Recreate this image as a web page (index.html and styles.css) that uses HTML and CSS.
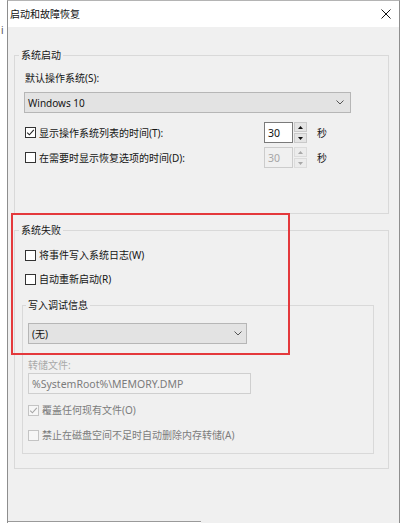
FILE: index.html
```html
<!DOCTYPE html>
<html lang="zh-CN">
<head>
<meta charset="utf-8">
<title>启动和故障恢复</title>
<link rel="stylesheet" href="styles.css">
</head>
<body>
<div class="screen">
  <div class="gutter">
    <span class="frag frag1">i</span>
  </div>
  <div class="window">
    <div class="titlebar">
      <span class="title">启动和故障恢复</span>
      <svg class="close" width="10" height="10" viewBox="0 0 10 10"><path d="M0.5 0.5 L9.5 9.5 M9.5 0.5 L0.5 9.5" stroke="#111" stroke-width="1" fill="none"/></svg>
    </div>
    <div class="content">
      <fieldset class="group g1">
        <legend class="lg1">系统启动</legend>
        <div class="body">
          <div class="text lbl-default">默认操作系统(S):</div>
          <div class="combo combo1">
            <span>Windows 10</span>
            <svg width="8" height="5" viewBox="0 0 8 5"><path d="M0.5 0.5 L4 4 L7.5 0.5" fill="none" stroke="#555" stroke-width="1"/></svg>
          </div>
          <div class="row row-spin spin-row1">
            <div class="check-label wide">
              <span class="cb"><svg width="9" height="9" viewBox="0 0 9 9"><path d="M1.2 4.6 L3.4 6.8 L7.8 1.8" stroke="#222" stroke-width="1.1" fill="none"/></svg></span>
              <span class="text">显示操作系统列表的时间(T):</span>
            </div>
            <div class="spin">
              <div class="spin-input">30</div>
              <div class="spin-btns">
                <span class="spin-btn"><svg width="5" height="3" viewBox="0 0 5 3"><path d="M0 3 L2.5 0 L5 3Z" fill="#111"/></svg></span>
                <span class="spin-btn"><svg width="5" height="3" viewBox="0 0 5 3"><path d="M0 0 L2.5 3 L5 0Z" fill="#111"/></svg></span>
              </div>
            </div>
            <span class="unit">秒</span>
          </div>
          <div class="row row-spin spin-row2">
            <div class="check-label wide">
              <span class="cb"></span>
              <span class="text">在需要时显示恢复选项的时间(D):</span>
            </div>
            <div class="spin disabled">
              <div class="spin-input">30</div>
              <div class="spin-btns">
                <span class="spin-btn"><svg width="5" height="3" viewBox="0 0 5 3"><path d="M0 3 L2.5 0 L5 3Z" fill="#a8a8a8"/></svg></span>
                <span class="spin-btn"><svg width="5" height="3" viewBox="0 0 5 3"><path d="M0 0 L2.5 3 L5 0Z" fill="#a8a8a8"/></svg></span>
              </div>
            </div>
            <span class="unit">秒</span>
          </div>
        </div>
      </fieldset>

      <fieldset class="group g2">
        <legend class="lg1">系统失败</legend>
        <div class="body">
          <div class="row check-row row-w">
            <div class="check-label">
              <span class="cb"></span>
              <span class="text">将事件写入系统日志(W)</span>
            </div>
          </div>
          <div class="row check-row row-r">
            <div class="check-label">
              <span class="cb"></span>
              <span class="text">自动重新启动(R)</span>
            </div>
          </div>
          <fieldset class="group sub">
            <legend class="lg2">写入调试信息</legend>
            <div class="body">
              <div class="combo combo2">
                <span>(无)</span>
                <svg width="8" height="5" viewBox="0 0 8 5"><path d="M0.5 0.5 L4 4 L7.5 0.5" fill="none" stroke="#555" stroke-width="1"/></svg>
              </div>
              <div class="text dim lbl-dump">转储文件:</div>
              <div class="field">%SystemRoot%\MEMORY.DMP</div>
              <div class="row check-row sub-row row-o">
                <div class="check-label">
                  <span class="cb off"><svg width="9" height="9" viewBox="0 0 9 9"><path d="M1.2 4.6 L3.4 6.8 L7.8 1.8" stroke="#a6a6a6" stroke-width="1.1" fill="none"/></svg></span>
                  <span class="text grey">覆盖任何现有文件(O)</span>
                </div>
              </div>
              <div class="row check-row sub-row row-a">
                <div class="check-label">
                  <span class="cb off"></span>
                  <span class="text grey">禁止在磁盘空间不足时自动删除内存转储(A)</span>
                </div>
              </div>
            </div>
          </fieldset>
        </div>
      </fieldset>
    </div>
    <div class="foot">
      <div class="foot-left"></div>
      <div class="foot-right"></div>
    </div>
  </div>
  <div class="red-box"></div>
</div>
</body>
</html>
```

FILE: styles.css
```css
html, body {
  margin: 0;
  padding: 0;
  background: #ffffff;
}
body {
  font-family: "Noto Sans", "Noto Sans CJK SC", sans-serif;
  font-size: 10px;
  color: #141414;
}
.screen {
  position: relative;
  display: flex;
  width: 400px;
  height: 523px;
  overflow: hidden;
}
.gutter {
  width: 7px;
  flex: none;
  overflow: hidden;
  display: flex;
  flex-direction: column;
  color: #555;
  font-size: 10px;
  line-height: 10px;
}
.frag { display: block; height: 10px; white-space: nowrap; }
.frag1 { margin-top: 25px; margin-left: 1px; }

.window {
  width: 393px;
  height: 523px;
  flex: none;
  box-sizing: border-box;
  border-left: 1px solid #8e8e8e;
  border-right: 1px solid #8e8e8e;
  border-top: 1px solid #b4b4b4;
  background: #f0f0f0;
  display: flex;
  flex-direction: column;
}
.titlebar {
  height: 26px;
  flex: none;
  background: #ffffff;
  display: flex;
  align-items: center;
  justify-content: space-between;
  padding: 0 8px 0 2px;
}
.title { font-size: 10px; line-height: 12px; color: #111; }
.close { display: block; margin-top: -1px; }

.content {
  flex: 1;
  padding-top: 22px;
  padding-left: 6px;
}
.foot { display: flex; height: 2px; flex: none; }
.foot-left { width: 193px; border-top: 1px solid #9a9a9a; background: #ffffff; }
.foot-right { flex: 1; background: #f0f0f0; }

.group {
  margin: 0;
  padding: 0;
  border: 1px solid #d9d9d9;
  box-sizing: border-box;
  min-width: 0;
}
.group legend {
  padding: 0 2px;
  line-height: 12px;
  font-size: 10px;
  color: #141414;
}
.lg1 { margin-left: 4px; }
.lg2 { margin-left: 3px; }
.g1 { width: 375px; }
.g1 > .body { padding: 0 0 45px 9px; }
.g2 { width: 375px; margin-top: 10px; }
.g2 > .body { padding: 0 0 14px 9px; }
.sub { width: 352px; margin-left: -2px; margin-top: 13px; }
.sub > .body { padding: 0 0 11px 5px; }

.text { line-height: 14px; white-space: nowrap; }
.dim { color: #a9a9a9; }
.grey { color: #7c7c7c; }
.lbl-default { margin-top: 10px; margin-left: 1px; }

.combo {
  box-sizing: border-box;
  height: 21px;
  background: #e3e3e3;
  border: 1px solid #b6b6b6;
  display: flex;
  align-items: center;
  justify-content: space-between;
  padding-left: 3px;
  line-height: 14px;
}
.combo svg { display: block; }
.combo1 { width: 327px; margin-top: 7px; padding-right: 6px; }
.combo2 { width: 219px; margin-top: 12px; padding-right: 4px; }

.row { display: flex; align-items: center; margin-left: 1px; }
.row-spin { height: 21px; }
.spin-row1 { margin-top: 9px; }
.spin-row2 { margin-top: 4px; }
.check-row { height: 14px; }
.row-w { margin-top: 12px; }
.row-r { margin-top: 10px; }
.sub-row { margin-left: 0; }
.row-o { margin-top: 9px; }
.row-a { margin-top: 11px; }

.check-label { display: flex; align-items: center; gap: 3px; }
.check-label.wide { width: 239px; flex: none; }
.cb {
  width: 11px;
  height: 11px;
  flex: none;
  box-sizing: border-box;
  border: 1px solid #333333;
  background: #ffffff;
  display: flex;
  align-items: center;
  justify-content: center;
}
.cb svg { display: block; }
.cb.off { border-color: #c4c4c4; background: #f6f6f6; }

.spin { display: flex; gap: 1px; height: 21px; flex: none; }
.spin-input {
  width: 29px;
  height: 21px;
  box-sizing: border-box;
  border: 1px solid #7a7a7a;
  background: #ffffff;
  padding-left: 3px;
  display: flex;
  align-items: center;
  font-size: 10.5px;
  color: #111;
}
.spin-btns {
  width: 13px;
  height: 21px;
  display: flex;
  flex-direction: column;
  gap: 1px;
}
.spin-btn {
  flex: 1;
  box-sizing: border-box;
  background: #e4e4e4;
  border: 1px solid #c9c9c9;
  display: flex;
  align-items: center;
  justify-content: center;
}
.spin-btn svg { display: block; }
.spin.disabled .spin-input { border-color: #cccccc; background: #f0f0f0; color: #a6a6a6; }
.spin.disabled .spin-btn { background: #ececec; border-color: #dcdcdc; }
.unit { margin-left: 10px; line-height: 14px; }

.lbl-dump { margin-top: 14px; }
.field {
  width: 223px;
  height: 21px;
  box-sizing: border-box;
  margin-top: 1px;
  border: 1px solid #cfcfcf;
  background: #f2f2f2;
  color: #7c7c7c;
  font-size: 10.5px;
  padding-left: 3px;
  display: flex;
  align-items: center;
  white-space: nowrap;
}

.red-box {
  position: absolute;
  left: 11px;
  top: 213px;
  width: 279px;
  height: 142px;
  box-sizing: border-box;
  border: 2px solid #e4393c;
  pointer-events: none;
}
```
